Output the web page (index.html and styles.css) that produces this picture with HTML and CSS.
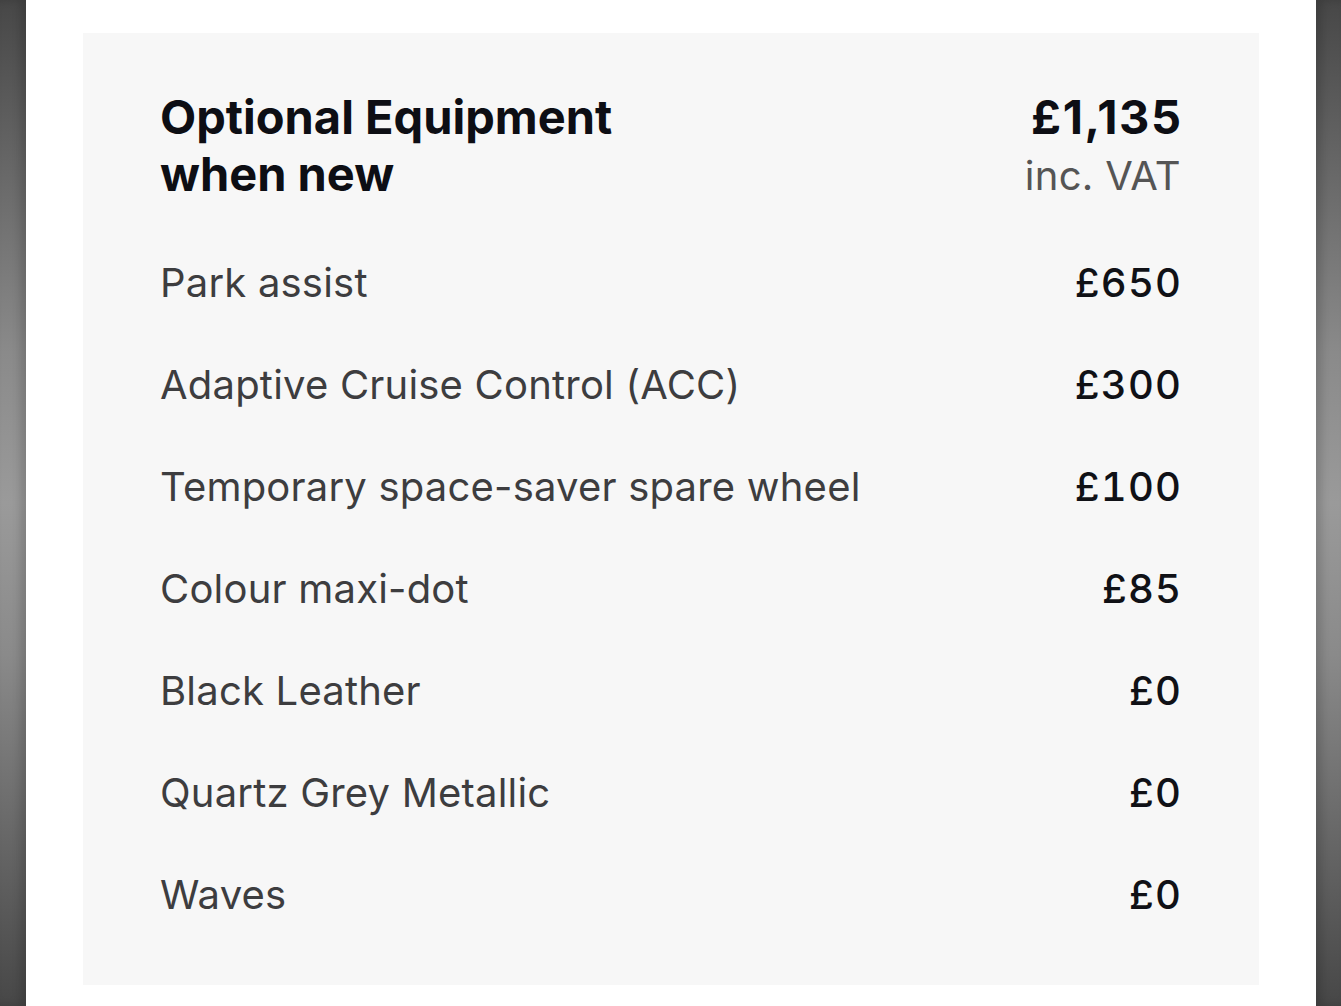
FILE: index.html
```html
<!DOCTYPE html>
<html lang="en">
<head>
    <meta charset="UTF-8">
    <meta name="viewport" content="width=device-width, initial-scale=1.0">
    <title>Optional Equipment</title>
    <link rel="stylesheet" href="styles.css">
</head>
<body>
    <div class="frame">
        <div class="edge edge-left"></div>
        <main class="page">
            <section class="card">
                <div class="card-head">
                    <h2 class="title">Optional Equipment<br>when new</h2>
                    <div class="total">
                        <div class="total-price">£1,135</div>
                        <div class="total-note">inc. VAT</div>
                    </div>
                </div>
                <ul class="items">
                    <li class="item"><span class="item-name">Park assist</span><span class="item-price">£650</span></li>
                    <li class="item"><span class="item-name">Adaptive Cruise Control (ACC)</span><span class="item-price">£300</span></li>
                    <li class="item"><span class="item-name">Temporary space-saver spare wheel</span><span class="item-price">£100</span></li>
                    <li class="item"><span class="item-name">Colour maxi-dot</span><span class="item-price">£85</span></li>
                    <li class="item"><span class="item-name">Black Leather</span><span class="item-price">£0</span></li>
                    <li class="item"><span class="item-name">Quartz Grey Metallic</span><span class="item-price">£0</span></li>
                    <li class="item"><span class="item-name">Waves</span><span class="item-price">£0</span></li>
                </ul>
            </section>
        </main>
        <div class="edge edge-right"></div>
    </div>
</body>
</html>
```

FILE: styles.css
```css
html, body { margin: 0; padding: 0; height: 100%; }
body { font-family: Inter, "Noto Sans", sans-serif; background: #fff; overflow: hidden; }

.frame { display: flex; height: 1006px; }
.edge { width: 26px; flex: none;
        background: linear-gradient(180deg, #474747 0%, #8a8a8a 35%, #9a9a9a 50%, #8a8a8a 65%, #474747 100%); }
.edge-left { box-shadow: inset -6px 0 8px rgba(0,0,0,0.15); }
.edge-right { width: 25px; box-shadow: inset 6px 0 8px rgba(0,0,0,0.15); }

.page { flex: 1; background: #fff; padding: 33px 57px 21px 57px; }

.card { background: #f7f7f7; height: 100%; box-sizing: border-box; padding: 55px 78px 0 77px; }

.card-head { display: flex; justify-content: space-between; align-items: flex-start; }
.title { margin: 0; font-size: 47px; font-weight: 700; line-height: 57px; color: #0d0e14; }
.total { text-align: right; }
.total-price { font-size: 47px; font-weight: 700; line-height: 57px; color: #0d0e14; letter-spacing: 1.5px; margin-right: -1.5px; }
.total-note { font-size: 40px; line-height: 57px; color: #555; margin-top: 2px; letter-spacing: 0.3px; }

.items { list-style: none; margin: 28px 0 0; padding: 0; }
.item { display: flex; justify-content: space-between; align-items: baseline; height: 102px; line-height: 102px; font-size: 40px; }
.item-name { color: #3d3d3f; letter-spacing: 0.2px; }
.item-price { color: #101116; font-weight: 500; font-variant-numeric: tabular-nums; letter-spacing: 1.2px; margin-right: -1.2px; }
```
